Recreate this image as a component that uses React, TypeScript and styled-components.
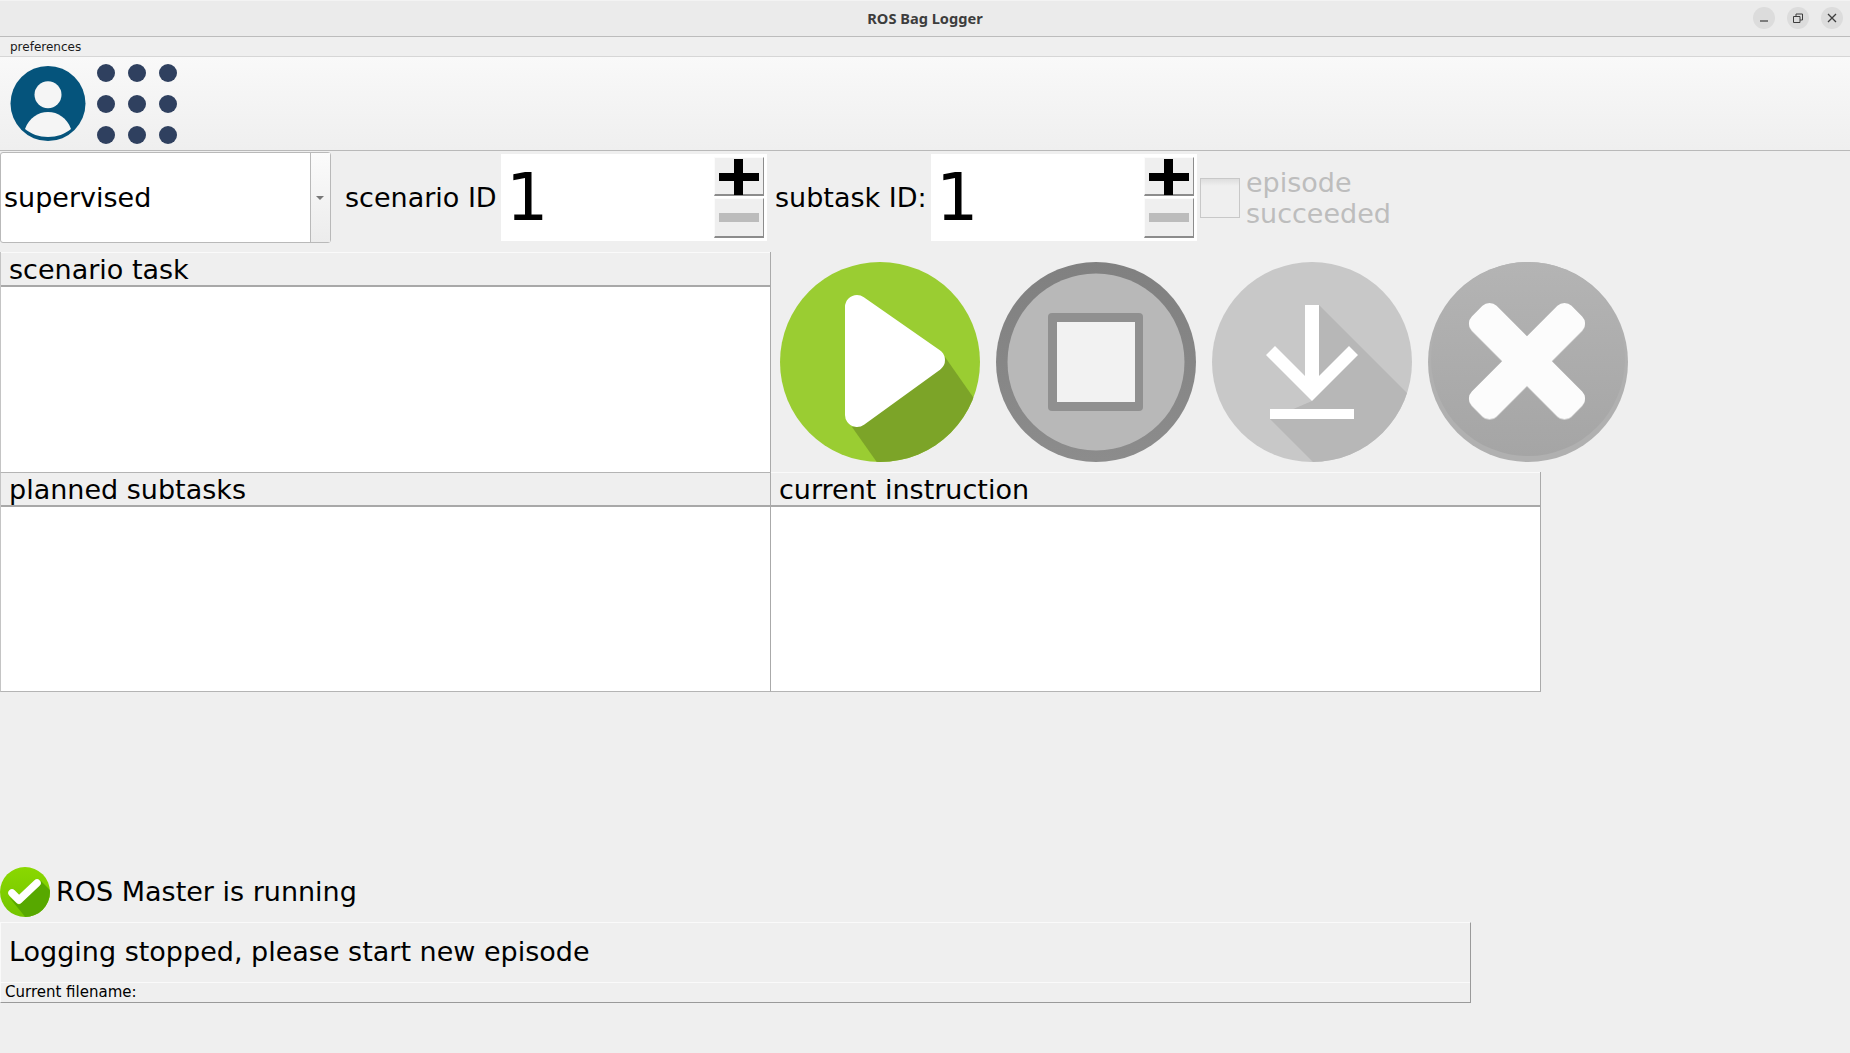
import React from "react";
import styled, { createGlobalStyle } from "styled-components";

const Global = createGlobalStyle`
  html, body { margin: 0; padding: 0; background: #efefef; }
  #root { width: 1850px; height: 1053px; overflow: hidden; }
  * { box-sizing: border-box; }
`;

const Window = styled.div`
  width: 1850px;
  height: 1053px;
  display: flex;
  flex-direction: column;
  background: #efefef;
  color: #000;
  font-family: "DejaVu Sans", sans-serif;
`;

const TitleBar = styled.header`
  height: 37px;
  flex: none;
  position: relative;
  display: flex;
  align-items: center;
  justify-content: flex-end;
  padding: 0 7px 1px 0;
  gap: 12px;
  background: #ebebeb;
  border-top: 1px solid #f3f3f3;
  border-bottom: 1px solid #bcbcbc;
`;

const TitleText = styled.div`
  position: absolute;
  left: 0;
  right: 0;
  top: 8px;
  text-align: center;
  font-family: "Noto Sans", sans-serif;
  font-weight: 700;
  font-size: 14.6px;
  line-height: 18px;
  color: #3d3d3d;
`;

const WindowButton = styled.button`
  width: 22px;
  height: 22px;
  padding: 0;
  border: 0;
  border-radius: 50%;
  background: #dcdcdc;
  display: flex;
  align-items: center;
  justify-content: center;
  color: #3d3d3d;
`;

const MenuBar = styled.nav`
  height: 20px;
  flex: none;
  padding-left: 10px;
  font-size: 12px;
  line-height: 21px;
  color: #1a1a1a;
  background: #efefef;
  border-bottom: 1px solid #d6d6d6;
`;

const Toolbar = styled.div`
  height: 94px;
  flex: none;
  display: flex;
  align-items: flex-start;
  padding: 7px 0 0 10px;
  gap: 11px;
  background: linear-gradient(#f9f9f9, #efefef);
  border-bottom: 1px solid #b9b9b9;
`;

const ControlRow = styled.div`
  height: 101px;
  flex: none;
  display: flex;
  align-items: flex-start;
  padding-top: 1px;
`;

const Combo = styled.div`
  width: 331px;
  height: 91px;
  flex: none;
  display: flex;
  background: #fff;
  border: 1px solid #b9b9b9;
  border-radius: 3px;
`;

const ComboValue = styled.div`
  flex: 1;
  padding-left: 3px;
  font-size: 27px;
  line-height: 89px;
`;

const ComboArrowBox = styled.div`
  width: 20px;
  padding-right: 2px;
  display: flex;
  align-items: center;
  justify-content: center;
  border-left: 1px solid #b9b9b9;
  background: linear-gradient(#fbfbfb, #ececec);

  &::after {
    content: "";
    width: 0;
    height: 0;
    border-left: 4px solid transparent;
    border-right: 4px solid transparent;
    border-top: 4px solid #777;
  }
`;

const FieldLabel = styled.label<{ $left: number }>`
  width: 156px;
  height: 91px;
  flex: none;
  margin-left: ${(p) => p.$left}px;
  font-size: 27px;
  line-height: 92px;
  white-space: nowrap;
`;

const Spin = styled.div`
  width: 266px;
  height: 87px;
  flex: none;
  margin-top: 2px;
  display: flex;
  justify-content: space-between;
  background: #fff;
  padding: 3px 3px 3px 0;
`;

const SpinValue = styled.div`
  padding-left: 5px;
  font-size: 66.67px;
  line-height: 80px;
`;

const SpinButtons = styled.div`
  width: 50px;
  display: flex;
  flex-direction: column;
  gap: 2px;
`;

const SpinButton = styled.div<{ $plus?: boolean }>`
  width: 50px;
  height: ${(p) => (p.$plus ? 39 : 40)}px;
  position: relative;
  background: #efefef;
  border-top: 1px solid #fbfbfb;
  border-left: 1px solid #fbfbfb;
  border-right: 1px solid #8c8c8c;
  border-bottom: 2px solid #8c8c8c;

  &::before {
    content: "";
    position: absolute;
    left: 4px;
    width: 40px;
    top: ${(p) => (p.$plus ? 15 : 14)}px;
    height: ${(p) => (p.$plus ? 8 : 9)}px;
    background: ${(p) => (p.$plus ? "#000" : "#bcbcbc")};
  }

  &::after {
    content: ${(p) => (p.$plus ? '""' : "none")};
    position: absolute;
    left: 19px;
    top: 1px;
    width: 9px;
    height: 36px;
    background: #000;
  }
`;

const CheckWrap = styled.div`
  display: flex;
  align-items: center;
  height: 87px;
  margin: 2px 0 0 3px;
  gap: 6px;
`;

const CheckBox = styled.div`
  width: 40px;
  height: 40px;
  border: 1px solid #c8c8c8;
  background: linear-gradient(#dedede, #efefef 18%);
`;

const CheckLabel = styled.div`
  width: 170px;
  font-size: 27px;
  line-height: 31px;
  color: #bdbdbd;
`;

const Tasks = styled.div`
  display: grid;
  grid-template-columns: 771px 770px;
  grid-template-rows: 220px 220px;
  flex: none;
`;

const Panel = styled.section<{ $overlap?: boolean; $noLeft?: boolean }>`
  display: flex;
  flex-direction: column;
  position: relative;
  z-index: ${(p) => (p.$overlap ? 1 : 0)};
  margin-bottom: ${(p) => (p.$overlap ? -1 : 0)}px;
  border-right: 1px solid #aaa;
  border-bottom: 1px solid #b4b4b4;
  border-left: ${(p) => (p.$noLeft ? "0" : "1px solid #c4c4c4")};
`;

const PanelHeader = styled.div`
  height: 35px;
  flex: none;
  padding-left: 8px;
  font-size: 27px;
  line-height: 33px;
  background: #efefef;
  border-top: 1px solid #fafafa;
  border-bottom: 2px solid #a8a8a8;
`;

const PanelBody = styled.div`
  flex: 1;
  background: #fff;
`;

const ActionButtons = styled.div`
  display: flex;
  gap: 16px;
  padding: 10px 0 0 9px;
  width: 860px;
`;

const ActionButton = styled.button`
  width: 200px;
  height: 200px;
  padding: 0;
  border: 0;
  background: none;
  display: block;
  flex: none;
`;

const Spacer = styled.div`
  flex: 1;
`;

const StatusRow = styled.div`
  height: 50px;
  flex: none;
  display: flex;
  align-items: center;
  gap: 6px;
  font-size: 27px;
  line-height: 48px;
`;

const InfoPanel = styled.div`
  width: 1471px;
  margin-top: 5px;
  margin-bottom: 50px;
  flex: none;
  border-top: 1px solid #fafafa;
  border-left: 1px solid #fafafa;
  border-right: 1px solid #9a9a9a;
  border-bottom: 1px solid #9a9a9a;
`;

const InfoMessage = styled.div`
  height: 60px;
  padding-left: 8px;
  font-size: 27px;
  line-height: 58px;
  border-bottom: 1px solid #fafafa;
`;

const FileName = styled.div`
  height: 19px;
  padding-left: 4px;
  font-size: 15px;
  line-height: 19px;
`;

const UserIcon = () => (
  <svg width="76" height="78" viewBox="0 -2 76 78">
    <circle cx="38" cy="37.5" r="37.5" fill="#05547c" />
    <circle cx="38" cy="28.7" r="13.5" fill="#f5f5f5" />
    <path d="M15 63C19 52 28 46 38 46C48 46 57 52 61 63C55 68 47 71 38 71C29 71 21 68 15 63Z" fill="#f5f5f5" />
  </svg>
);

const GridIcon = () => (
  <svg width="80" height="80" viewBox="0 0 80 80">
    {[9, 40, 71].flatMap((cy) =>
      [9, 40, 71].map((cx) => <circle key={`${cx}-${cy}`} cx={cx} cy={cy} r="9" fill="#2f405f" />)
    )}
  </svg>
);

const PlayIcon = () => (
  <svg width="200" height="200" viewBox="0 0 200 200">
    <defs>
      <clipPath id="playClip"><circle cx="100" cy="100" r="100" /></clipPath>
    </defs>
    <circle cx="100" cy="100" r="100" fill="#9acd32" />
    <polygon points="165,95 235,195 125,240 72,165" fill="#7ca428" clipPath="url(#playClip)" />
    <polygon points="77,45 153,98 77,153" fill="#fff" stroke="#fff" strokeWidth="24" strokeLinejoin="round" />
  </svg>
);

const StopIcon = () => (
  <svg width="200" height="200" viewBox="0 0 200 200">
    <defs>
      <linearGradient id="stopRing" x1="0" y1="0" x2="0" y2="1">
        <stop offset="0" stopColor="#808080" />
        <stop offset="1" stopColor="#8c8c8c" />
      </linearGradient>
    </defs>
    <circle cx="100" cy="100" r="100" fill="url(#stopRing)" />
    <circle cx="100" cy="100" r="88.5" fill="#b8b8b8" />
    <rect x="52" y="51" width="95" height="98" rx="4" fill="#909090" />
    <rect x="61" y="60" width="78" height="80" fill="#f2f2f2" />
  </svg>
);

const SaveIcon = () => (
  <svg width="200" height="200" viewBox="0 0 200 200">
    <defs>
      <clipPath id="saveClip"><circle cx="100" cy="100" r="100" /></clipPath>
    </defs>
    <circle cx="100" cy="100" r="100" fill="#c8c8c8" />
    <polygon points="107,43 240,176 240,240 141,240 58,157 100,139" fill="#b7b7b7" clipPath="url(#saveClip)" />
    <polygon points="93,43 107,43 107,114 137,84 146,93 100,139 54,93 63,84 93,114" fill="#fff" />
    <rect x="58" y="147" width="84" height="10" fill="#fff" />
  </svg>
);

const CancelIcon = () => (
  <svg width="200" height="200" viewBox="0 0 200 200">
    <defs>
      <linearGradient id="cancelFill" x1="0" y1="0" x2="0" y2="1">
        <stop offset="0" stopColor="#b4b4b4" />
        <stop offset="1" stopColor="#a5a5a5" />
      </linearGradient>
    </defs>
    <circle cx="100" cy="100" r="100" fill="#b0b0b0" />
    <circle cx="100" cy="97" r="97" fill="url(#cancelFill)" />
    <g transform="translate(0 1)" fill="#d2d2d2">
      <rect x="28.5" y="81.5" width="141" height="35" rx="10" transform="rotate(45 99 99)" />
      <rect x="28.5" y="81.5" width="141" height="35" rx="10" transform="rotate(-45 99 99)" />
    </g>
    <g fill="#fcfcfc">
      <rect x="28.5" y="81.5" width="141" height="35" rx="10" transform="rotate(45 99 99)" />
      <rect x="28.5" y="81.5" width="141" height="35" rx="10" transform="rotate(-45 99 99)" />
    </g>
  </svg>
);

const CheckIcon = () => (
  <svg width="50" height="50" viewBox="0 0 50 50">
    <defs>
      <linearGradient id="okFill" x1="0" y1="0" x2="0" y2="1">
        <stop offset="0" stopColor="#8ad800" />
        <stop offset="1" stopColor="#73c400" />
      </linearGradient>
      <clipPath id="okClip"><circle cx="25" cy="25" r="25" /></clipPath>
    </defs>
    <circle cx="25" cy="25" r="25" fill="url(#okFill)" />
    <polygon points="9,30 19,38 41,14 62,35 35,62" fill="#57a800" clipPath="url(#okClip)" />
    <polyline points="12,26 19,33 37,16" fill="none" stroke="#fff" strokeWidth="7.5" strokeLinecap="round" strokeLinejoin="round" />
  </svg>
);

const SpinBox = () => (
  <Spin>
    <SpinValue>1</SpinValue>
    <SpinButtons>
      <SpinButton $plus />
      <SpinButton />
    </SpinButtons>
  </Spin>
);

export default function App() {
  return (
    <Window>
      <Global />
      <TitleBar>
        <TitleText>ROS Bag Logger</TitleText>
        <WindowButton aria-label="minimize">
          <svg width="10" height="10" viewBox="0 0 10 10"><path d="M1 8H9" stroke="currentColor" strokeWidth="1.2" /></svg>
        </WindowButton>
        <WindowButton aria-label="restore">
          <svg width="10" height="10" viewBox="0 0 10 10"><path d="M0.5 3.5H7V9.5H0.5ZM3 3.5V1H9.5V7H7" fill="none" stroke="currentColor" strokeWidth="1" /></svg>
        </WindowButton>
        <WindowButton aria-label="close">
          <svg width="10" height="10" viewBox="0 0 10 10"><path d="M1 1L9 9M9 1L1 9" stroke="currentColor" strokeWidth="1.3" /></svg>
        </WindowButton>
      </TitleBar>
      <MenuBar>preferences</MenuBar>
      <Toolbar>
        <UserIcon />
        <GridIcon />
      </Toolbar>
      <ControlRow>
        <Combo>
          <ComboValue>supervised</ComboValue>
          <ComboArrowBox />
        </Combo>
        <FieldLabel $left={14}>scenario ID</FieldLabel>
        <SpinBox />
        <FieldLabel $left={8}>subtask ID:</FieldLabel>
        <SpinBox />
        <CheckWrap>
          <CheckBox />
          <CheckLabel>episode succeeded</CheckLabel>
        </CheckWrap>
      </ControlRow>
      <Tasks>
        <Panel $overlap>
          <PanelHeader>scenario task</PanelHeader>
          <PanelBody />
        </Panel>
        <ActionButtons>
          <ActionButton aria-label="start"><PlayIcon /></ActionButton>
          <ActionButton aria-label="stop"><StopIcon /></ActionButton>
          <ActionButton aria-label="save"><SaveIcon /></ActionButton>
          <ActionButton aria-label="discard"><CancelIcon /></ActionButton>
        </ActionButtons>
        <Panel>
          <PanelHeader>planned subtasks</PanelHeader>
          <PanelBody />
        </Panel>
        <Panel $noLeft>
          <PanelHeader>current instruction</PanelHeader>
          <PanelBody />
        </Panel>
      </Tasks>
      <Spacer />
      <StatusRow>
        <CheckIcon />
        ROS Master is running
      </StatusRow>
      <InfoPanel>
        <InfoMessage>Logging stopped, please start new episode</InfoMessage>
        <FileName>Current filename:</FileName>
      </InfoPanel>
    </Window>
  );
}
